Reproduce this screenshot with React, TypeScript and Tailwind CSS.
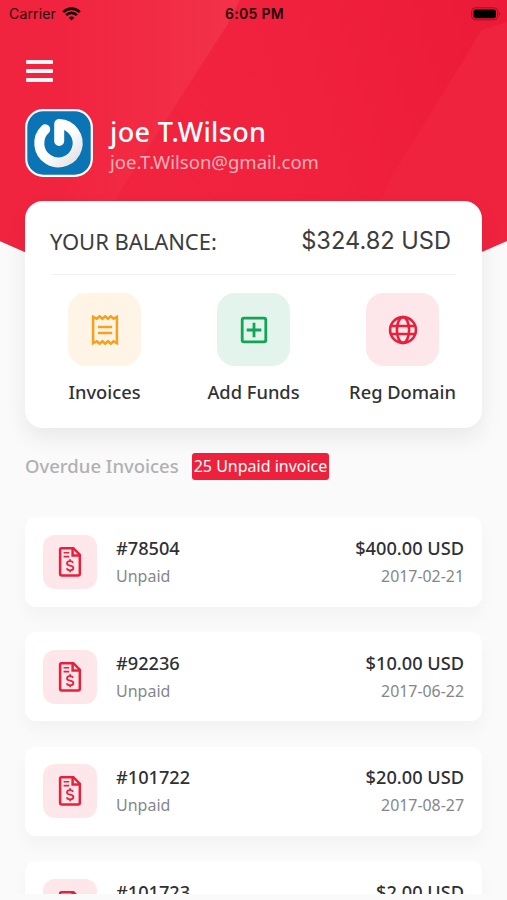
import type { ReactNode } from "react";

const invoices = [
  { id: "#78504", amount: "$400.00 USD", date: "2017-02-21" },
  { id: "#92236", amount: "$10.00 USD", date: "2017-06-22" },
  { id: "#101722", amount: "$20.00 USD", date: "2017-08-27" },
  { id: "#101723", amount: "$2.00 USD", date: "2017-09-27" },
];

function HeaderBackdrop() {
  return (
    <svg className="absolute inset-x-0 top-0 h-[352px] w-full" viewBox="0 0 507 352" preserveAspectRatio="none">
      <defs>
        <linearGradient id="left" x1="0" y1="0" x2="1" y2="0">
          <stop offset="0" stopColor="#f1243f" />
          <stop offset="0.25" stopColor="#f1243f" />
          <stop offset="1" stopColor="#f3324a" />
        </linearGradient>
        <linearGradient id="mid" x1="0" y1="0.2" x2="1" y2="0">
          <stop offset="0" stopColor="#f1243f" />
          <stop offset="0.5" stopColor="#f0213c" />
          <stop offset="1" stopColor="#eb1b37" />
        </linearGradient>
        <clipPath id="shape">
          <path d="M0 0H507V241L253 352L0 241Z" />
        </clipPath>
      </defs>
      <g clipPath="url(#shape)">
        <path d="M0 0H507V352H0Z" fill="#f0233e" />
        <path d="M0 0H240L228 24L118 195L70 300H0Z" fill="url(#left)" />
        <path d="M240 0H507V22L482 30L390 180L340 300H70L118 195L228 24Z" fill="url(#mid)" />
      </g>
    </svg>
  );
}

function StatusBar() {
  return (
    <div className="grid h-7 grid-cols-3 items-center px-[9px] text-[#26060b]">
      <div className="flex items-center gap-[6px]">
        <span className="text-[14px] leading-7 tracking-[0.15px]">Carrier</span>
        <svg width="19" height="14" viewBox="0 0 19 14" fill="none" stroke="#180306" strokeWidth="2.7">
          <path d="M1.2 5.1C5.8 .4 13.2 .4 17.8 5.1" />
          <path d="M4.1 8.1C7.1 5.1 11.9 5.1 14.9 8.1" />
          <path d="M6.6 10.5C8.2 9 10.8 9 12.4 10.5L9.5 13.5Z" fill="#180306" stroke="none" />
        </svg>
      </div>
      <span className="pl-[2px] text-center text-[14px] font-semibold leading-7 tracking-[0.3px]">6:05 PM</span>
      <svg className="-mr-[3px] justify-self-end" width="30" height="14" viewBox="0 0 30 14">
        <rect x="0.7" y="0.8" width="26" height="12" rx="3.5" fill="none" stroke="#981425" strokeWidth="1" />
        <rect x="2.5" y="2.6" width="22.4" height="8.6" rx="2" fill="#000" />
        <path d="M28 4.8Q30.2 6.8 28 8.8Z" fill="#981425" />
      </svg>
    </div>
  );
}

function Avatar() {
  return (
    <svg width="68" height="68" viewBox="0 0 68 68" fill="none">
      <defs>
        <linearGradient id="ring" x1="0" y1="0" x2="1" y2="1">
          <stop offset="0.5" stopColor="#ffffff" />
          <stop offset="1" stopColor="#dfe1e4" />
        </linearGradient>
      </defs>
      <rect x="1.2" y="1.2" width="65.6" height="65.6" rx="17" fill="#0b74b5" stroke="#fff" strokeWidth="2.2" />
      <path d="M20.2 20.3A19.2 19.2 0 1 0 34.2 15V32" stroke="url(#ring)" strokeWidth="10" strokeLinecap="round" strokeLinejoin="round" />
    </svg>
  );
}

function ReceiptIcon() {
  return (
    <svg width="28" height="30" viewBox="0 0 28 30" fill="none" stroke="#f79f1f" strokeWidth="2.5">
      <path d="M2.1 1.8V28.2L5.8 26.2L8.6 28.7L11.4 26.2L14.2 28.7L17 26.2L19.8 28.7L22.6 26.2L25.9 28.2V1.8L22.6 3.8L19.8 1.3L17 3.8L14.2 1.3L11.4 3.8L8.6 1.3L5.8 3.8Z" />
      <path d="M7 12H21.2M7 18H21.2" strokeWidth="2.5" />
    </svg>
  );
}

function AddIcon() {
  return (
    <svg width="28" height="28" viewBox="0 0 28 28" fill="none" stroke="#12a556" strokeWidth="2.8">
      <rect x="2.2" y="2.2" width="23.6" height="23.6" rx="1.8" />
      <path d="M14 6.7V21.3M6.7 14H21.3" />
    </svg>
  );
}

function GlobeIcon() {
  return (
    <svg width="30" height="30" viewBox="0 0 30 30" fill="none" stroke="#e91f3b" strokeWidth="2.6">
      <circle cx="15" cy="15" r="12.9" />
      <ellipse cx="15" cy="15" rx="6.1" ry="12.9" />
      <path d="M3 11H27M3 19H27" />
    </svg>
  );
}

function InvoiceIcon() {
  return (
    <svg width="24" height="32" viewBox="0 0 24 32" fill="none" stroke="#e91f3b" strokeWidth="2.5">
      <path d="M3.3 2.2H15.4L21.8 8.7V27.8Q21.8 29.5 20.1 29.5H3.8Q2.1 29.5 2.1 27.8V3.5Q2.1 2.2 3.3 2.2Z" />
      <path d="M14.6 2.5V9.5H21.5" />
      <path d="M5.6 6.8H11.2M5.6 10.6H11.2" strokeWidth="1.6" />
      <path d="M15.1 16.8C14.5 15.7 13.5 15.2 12.1 15.2C10.2 15.2 9 16.1 9 17.5C9 20.7 15.4 18.7 15.4 22C15.4 23.5 14 24.3 12.1 24.3C10.4 24.3 9.2 23.6 8.6 22.3M12.1 13.2V15.2M12.1 24.3V26.3" strokeWidth="1.8" />
    </svg>
  );
}

function Action({ label, tint, children }: { label: string; tint: string; children: ReactNode }) {
  return (
    <div className="flex w-[149px] flex-col items-center">
      <div className={`flex size-[73px] items-center justify-center rounded-[18px] ${tint}`}>{children}</div>
      <span className="mt-3 whitespace-nowrap text-[18.3px] font-medium leading-7 text-[#303236]">{label}</span>
    </div>
  );
}

function InvoiceRow({ id, amount, date }: (typeof invoices)[number]) {
  return (
    <div className="flex h-[89.5px] shrink-0 items-center rounded-[11px] bg-white pl-[18px] pr-[18px] shadow-[0_10px_18px_rgba(0,0,0,0.03)]">
      <div className="flex size-[54px] items-center justify-center rounded-[12px] bg-[#fee7ea]">
        <InvoiceIcon />
      </div>
      <div className="ml-[19px] flex flex-1 flex-col">
        <span className="text-[18.2px] font-medium leading-7 text-[#2e3034]">{id}</span>
        <span className="text-[16px] leading-7 text-[#85878a]">Unpaid</span>
      </div>
      <div className="flex flex-col text-right">
        <span className="text-[18.2px] font-medium leading-7 text-[#2e3034]">{amount}</span>
        <span className="text-[15.9px] leading-7 text-[#85878a]">{date}</span>
      </div>
    </div>
  );
}

export default function App() {
  return (
    <div className="relative h-[900px] w-[507px] overflow-hidden bg-[#fafafa] font-['Noto_Sans',sans-serif]">
      <HeaderBackdrop />
      <div className="relative flex h-[894px] flex-col overflow-hidden">
        <div className="font-['Inter',sans-serif]">
          <StatusBar />
        </div>
        <button className="ml-[26px] mt-[31.5px] flex w-[27px] flex-col gap-[5.25px]" aria-label="Menu">
          <span className="h-[4px] w-full rounded-[1px] bg-[#fff5f6]" />
          <span className="h-[4px] w-full rounded-[1px] bg-[#fff5f6]" />
          <span className="h-[4px] w-full rounded-[1px] bg-[#fff5f6]" />
        </button>
        <div className="ml-[25px] mt-[27px] flex h-[68px] items-center gap-[17px]">
          <Avatar />
          <div className="flex flex-col pt-[3px]">
            <span className="text-[27px] font-medium leading-[34px] tracking-[0.35px] text-white">joe T.Wilson</span>
            <span className="text-[18.5px] leading-[26px] text-[#fcb1ba]">joe.T.Wilson@gmail.com</span>
          </div>
        </div>
        <div className="mx-[25px] mt-[24px] h-[227px] shrink-0 rounded-[18px] bg-white shadow-[0_10px_22px_rgba(0,0,0,0.07)]">
          <div className="mx-[26px] flex h-[74px] items-center justify-between border-b border-[#f2f2f2] pr-[5px] pt-[6px]">
            <span className="-ml-px text-[22px] leading-8 tracking-[-0.05px] text-[#3b3d41]">YOUR BALANCE:</span>
            <span className="pt-px font-['Inter',sans-serif] text-[23.6px] leading-8 text-[#3b3d41]">$324.82 USD</span>
          </div>
          <div className="mt-[18px] flex justify-center">
            <Action label="Invoices" tint="bg-[#fff5e6]"><ReceiptIcon /></Action>
            <Action label="Add Funds" tint="bg-[#e2f4eb]"><AddIcon /></Action>
            <Action label="Reg Domain" tint="bg-[#fde7ea]"><GlobeIcon /></Action>
          </div>
        </div>
        <div className="ml-[25px] mt-[24px] flex h-[28px] shrink-0 items-center gap-[13px]">
          <h2 className="w-[154px] whitespace-nowrap text-[18.5px] font-medium leading-7 text-[#b0b1b3]">Overdue Invoices</h2>
          <span className="flex h-[27px] w-[137px] items-center justify-center whitespace-nowrap rounded-[3px] bg-[#ee213d] text-[16px] text-white">
            25 Unpaid invoice
          </span>
        </div>
        <div className="mx-[25px] mt-[37px] flex shrink-0 flex-col gap-[25.25px]">
          {invoices.map((invoice) => (
            <InvoiceRow key={invoice.id} {...invoice} />
          ))}
        </div>
      </div>
    </div>
  );
}
